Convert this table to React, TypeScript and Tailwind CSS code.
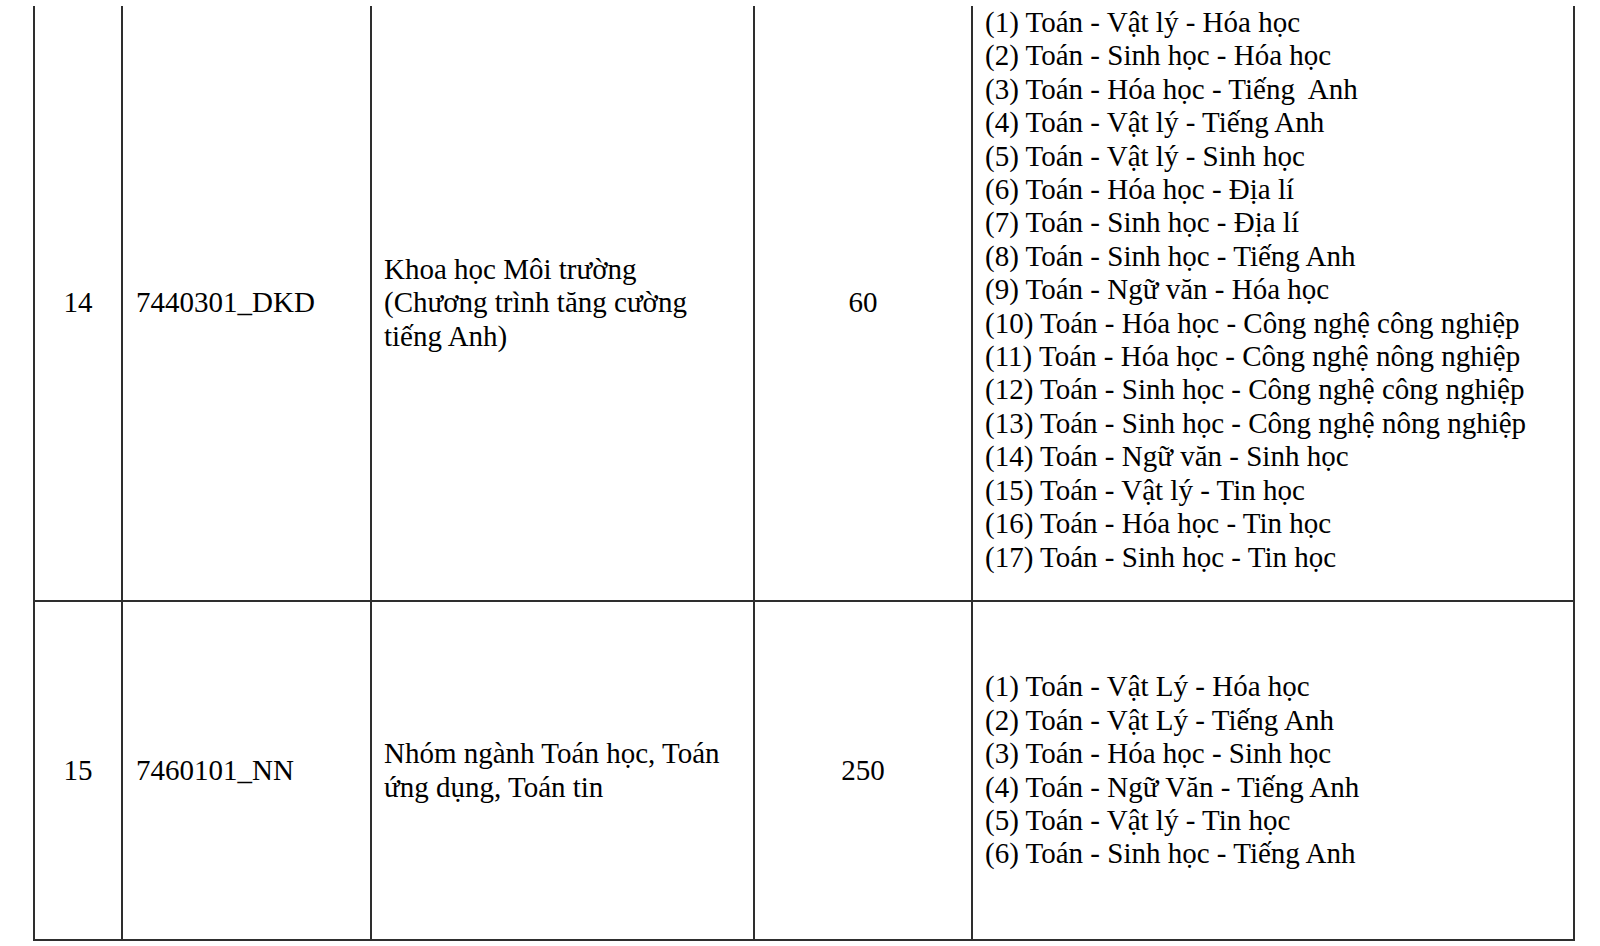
const rows = [
  {
    stt: '14',
    code: '7440301_DKD',
    name: ['Khoa học Môi trường', '(Chương trình tăng cường', 'tiếng Anh)'],
    quota: '60',
    combos: [
      '(1) Toán - Vật lý - Hóa học',
      '(2) Toán - Sinh học - Hóa học',
      '(3) Toán - Hóa học - Tiếng\u00a0 Anh',
      '(4) Toán - Vật lý - Tiếng Anh',
      '(5) Toán - Vật lý - Sinh học',
      '(6) Toán - Hóa học - Địa lí',
      '(7) Toán - Sinh học - Địa lí',
      '(8) Toán - Sinh học - Tiếng Anh',
      '(9) Toán - Ngữ văn - Hóa học',
      '(10) Toán - Hóa học - Công nghệ công nghiệp',
      '(11) Toán - Hóa học - Công nghệ nông nghiệp',
      '(12) Toán - Sinh học - Công nghệ công nghiệp',
      '(13) Toán - Sinh học - Công nghệ nông nghiệp',
      '(14) Toán - Ngữ văn - Sinh học',
      '(15) Toán - Vật lý - Tin học',
      '(16) Toán - Hóa học - Tin học',
      '(17) Toán - Sinh học - Tin học',
    ],
  },
  {
    stt: '15',
    code: '7460101_NN',
    name: ['Nhóm ngành Toán học, Toán', 'ứng dụng, Toán tin'],
    quota: '250',
    combos: [
      '(1) Toán - Vật Lý - Hóa học',
      '(2) Toán - Vật Lý - Tiếng Anh',
      '(3) Toán - Hóa học - Sinh học',
      '(4) Toán - Ngữ Văn - Tiếng Anh',
      '(5) Toán - Vật lý - Tin học',
      '(6) Toán - Sinh học - Tiếng Anh',
    ],
  },
]

export default function App() {
  return (
    <div
      className="w-[1600px] h-[946px] bg-white text-black overflow-hidden pt-[6px] pl-[33px]"
      style={{ fontFamily: '"Liberation Serif", "Times New Roman", serif' }}
    >
      <table className="border-collapse table-fixed w-[1540px] text-[29px] leading-[33.4px]">
        <colgroup>
          <col className="w-[88px]" />
          <col className="w-[249px]" />
          <col className="w-[383px]" />
          <col className="w-[218px]" />
          <col className="w-[602px]" />
        </colgroup>
        <tbody>
          {rows.map((r, i) => (
            <tr key={r.stt} className={i === 0 ? 'h-[595px]' : 'h-[339px]'}>
              <td className={`border-2 border-[#2e2e2e] text-center align-middle ${i === 0 ? 'border-t-0' : ''}`}>
                {r.stt}
              </td>
              <td className={`border-2 border-[#2e2e2e] pl-[13px] align-middle ${i === 0 ? 'border-t-0' : ''}`}>
                {r.code}
              </td>
              <td className={`border-2 border-[#2e2e2e] pl-[12px] align-middle ${i === 0 ? 'border-t-0' : ''}`}>
                {r.name.map((n) => (
                  <div key={n}>{n}</div>
                ))}
              </td>
              <td className={`border-2 border-[#2e2e2e] text-center align-middle ${i === 0 ? 'border-t-0' : ''}`}>
                {r.quota}
              </td>
              <td
                className={`border-2 border-[#2e2e2e] pl-[12px] ${
                  i === 0 ? 'border-t-0 align-top pt-0' : 'align-middle'
                }`}
              >
                {r.combos.map((c) => (
                  <div key={c} className="whitespace-pre">{c}</div>
                ))}
              </td>
            </tr>
          ))}
        </tbody>
      </table>
    </div>
  )
}
